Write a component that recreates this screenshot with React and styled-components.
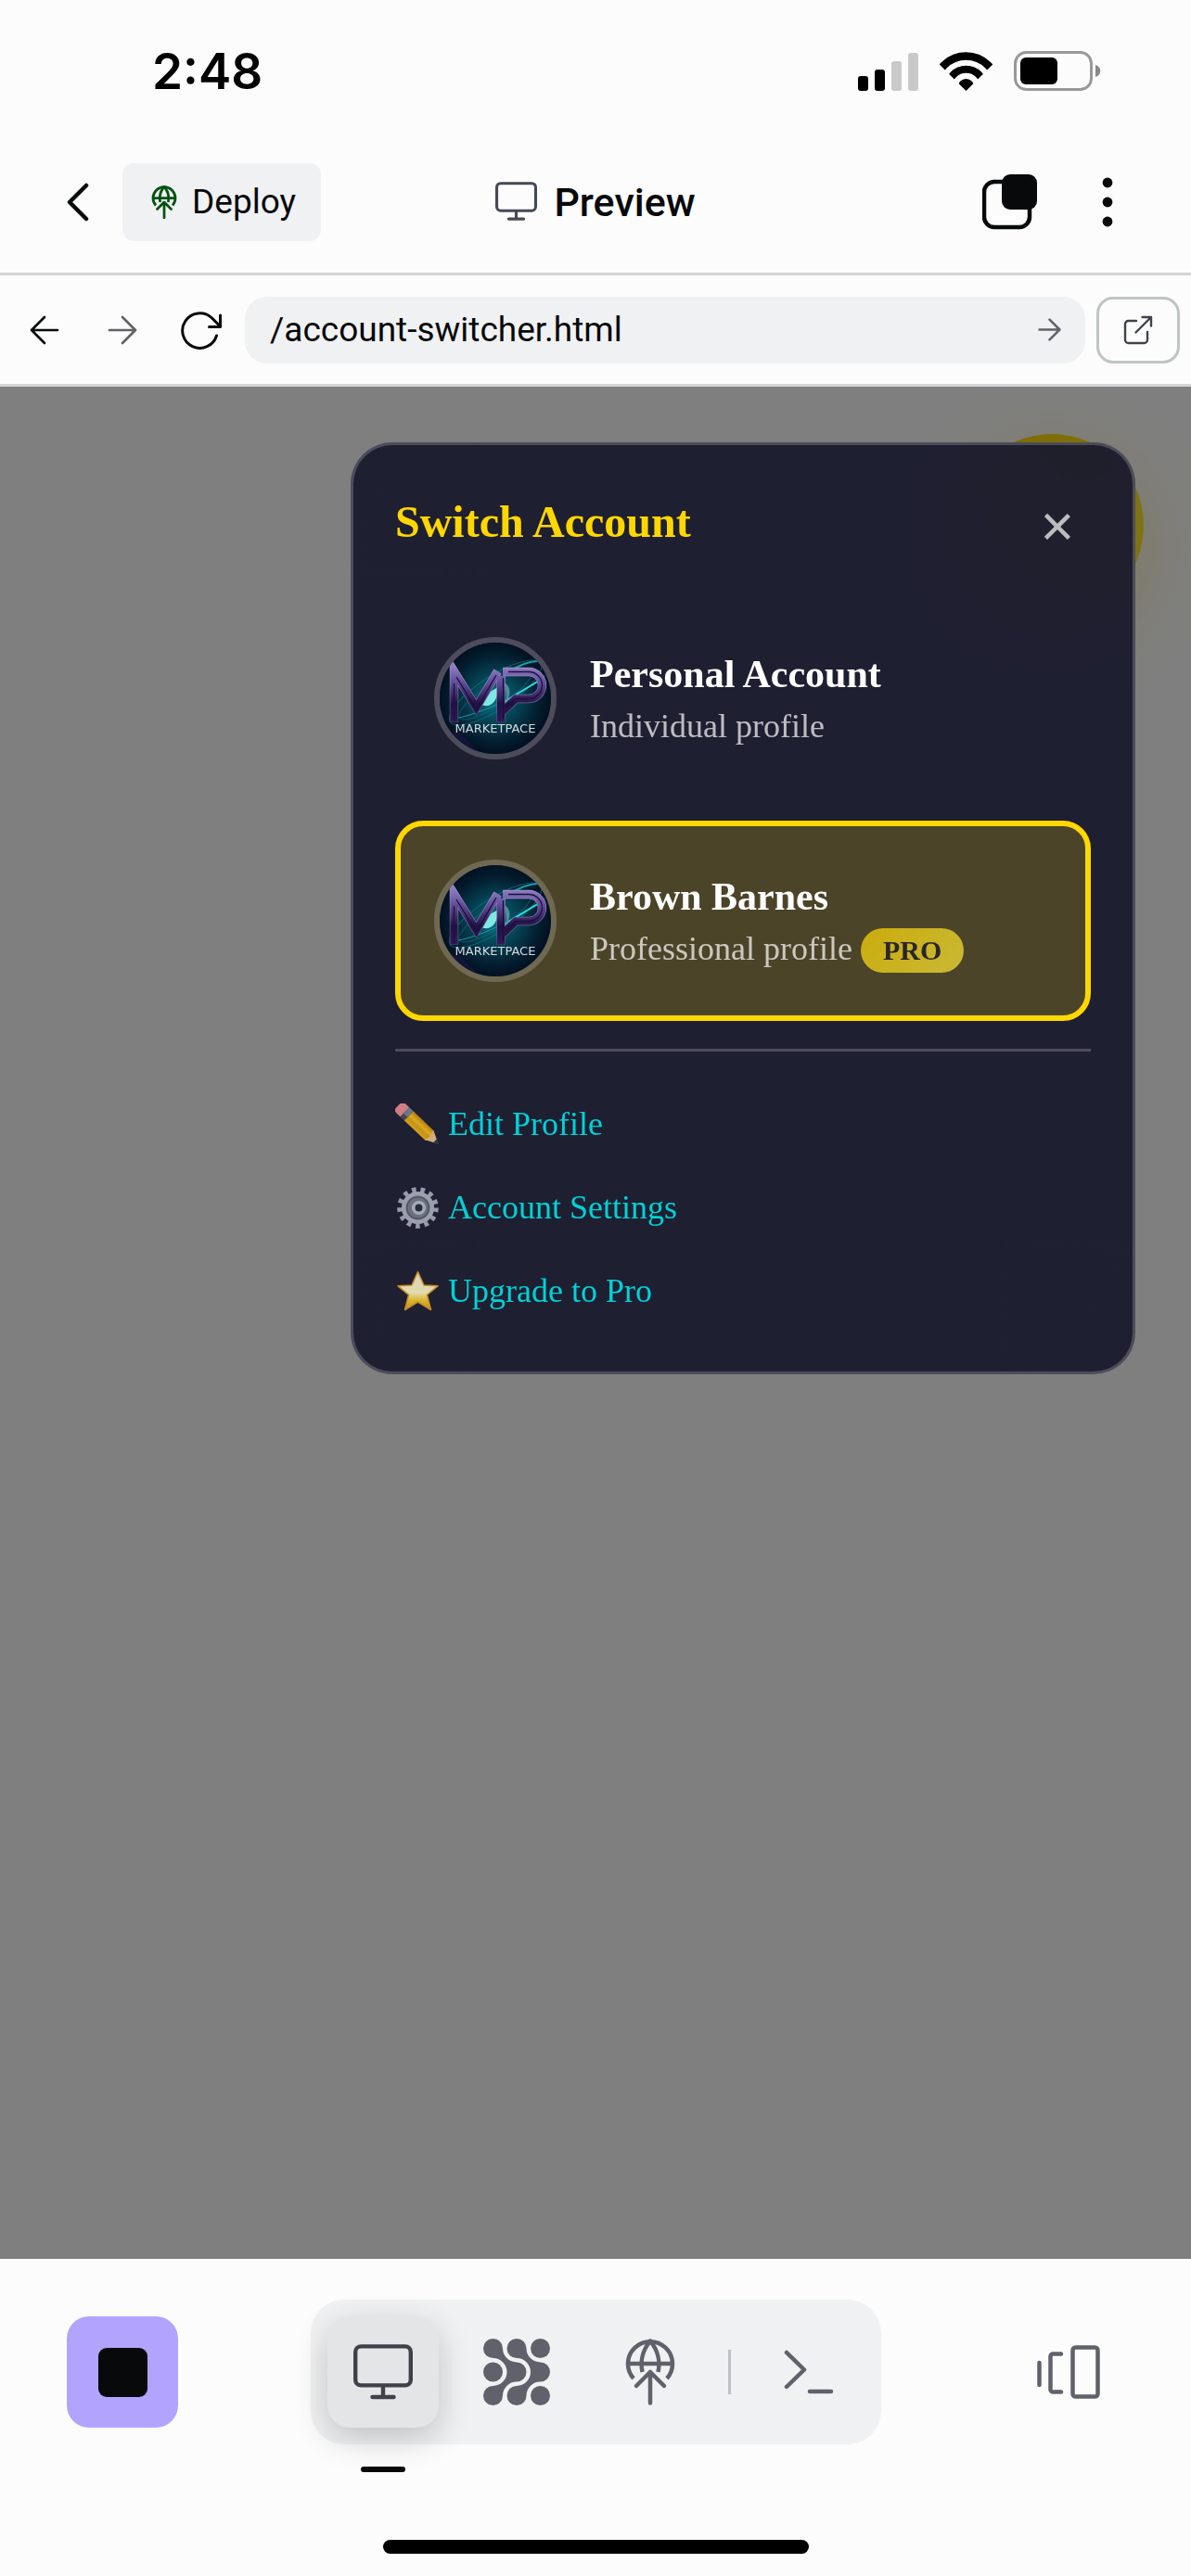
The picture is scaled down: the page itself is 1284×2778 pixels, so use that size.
import React, { useState } from "react";
import styled, { createGlobalStyle } from "styled-components";

const GlobalStyle = createGlobalStyle`
  * { box-sizing: border-box; }
  body { margin: 0; background: #fcfcfc; }
  button, input { font: inherit; color: inherit; border: 0; background: none; padding: 0; margin: 0; }
  svg { display: block; flex: none; }
`;

const Page = styled.div`
  min-height: 100vh;
  display: flex;
  flex-direction: column;
  background: #fcfcfc;
  color: #07090b;
  font-family: Roboto, "Liberation Sans", sans-serif;
`;

/* Status bar */

const StatusBar = styled.div`
  height: 141px;
  padding: 12px 97px 0 164px;
  display: flex;
  align-items: center;
  justify-content: space-between;
  color: #000;
`;

const Clock = styled.time`
  font: 600 53px/60px Inter, "Liberation Sans", sans-serif;
`;

const StatusIcons = styled.div`
  display: flex;
  align-items: center;
  gap: 23px;
`;

/* App header */

const Header = styled.header`
  height: 156px;
  padding: 0 48px;
  display: grid;
  grid-template-columns: 1fr auto 1fr;
  align-items: center;
  border-bottom: 3px solid #d3d5d7;
`;

const HeaderSide = styled.div`
  display: flex;
  align-items: center;
  justify-content: ${(p) => (p.$end ? "flex-end" : "flex-start")};
  gap: ${(p) => (p.$end ? 21 : 12)}px;
`;

const IconButton = styled.button`
  width: ${(p) => p.$size || 84}px;
  height: ${(p) => p.$size || 84}px;
  flex: none;
  display: flex;
  align-items: center;
  justify-content: center;
  color: ${(p) => p.$color || "#07090b"};
`;

const DeployButton = styled.button`
  && {
    height: 84px;
    padding: 0 27px;
    display: flex;
    align-items: center;
    gap: 12px;
    border-radius: 12px;
    background: #f0f1f3;
    font-size: 37px;
    line-height: 48px;
  }
`;

const Title = styled.h1`
  margin: 0;
  display: flex;
  align-items: center;
  gap: 18px;
  font-size: 43px;
  line-height: 54px;
  font-weight: 500;
`;

const TitleIcon = styled.span`
  color: #464955;
`;

/* Address bar */

const AddressRow = styled.form`
  height: 120px;
  padding: 0 12px 0 6px;
  display: flex;
  align-items: center;
  border-bottom: 3px solid #d3d5d7;
`;

const AddressField = styled.div`
  flex: 1;
  min-width: 0;
  height: 72px;
  margin: 0 12px 0 6px;
  padding-left: 27px;
  display: flex;
  align-items: center;
  border-radius: 24px;
  background: #f0f1f3;
`;

const AddressInput = styled.input`
  && {
    flex: 1;
    min-width: 0;
    height: 48px;
    font-size: 37px;
    line-height: 48px;
    outline: none;
  }
`;

const OpenButton = styled.button`
  && {
    width: 90px;
    height: 72px;
    flex: none;
    display: flex;
    align-items: center;
    justify-content: center;
    border: 3px solid #bfc4c5;
    border-radius: 18px;
    color: #40434b;
  }
`;

/* Previewed page */

const Stage = styled.main`
  position: relative;
  isolation: isolate;
  flex: 1;
  padding: 60px;
  display: flex;
  flex-direction: column;
  align-items: flex-end;
  overflow: hidden;
  background: #fff;
  font-family: "Liberation Serif", serif;
`;

const FloatingButton = styled.button`
  && {
    position: absolute;
    top: 51px;
    right: 51px;
    width: 198px;
    height: 198px;
    border-radius: 50%;
    background: linear-gradient(135deg, #ffd700, #ffeb3b);
    box-shadow: 0 24px 90px rgba(255, 215, 0, 0.3);
  }
`;

const Scrim = styled.div`
  position: absolute;
  inset: 0;
  background: rgba(0, 0, 0, 0.5);
`;

const Panel = styled.section`
  position: relative;
  width: 100%;
  max-width: 846px;
  padding: 45px 45px 42px;
  border: 3px solid rgba(255, 255, 255, 0.2);
  border-radius: 45px;
  background: rgba(26, 26, 46, 0.95);
  backdrop-filter: blur(60px);
  color: #fff;
`;

const PanelHeader = styled.div`
  margin-bottom: 36px;
  display: flex;
  align-items: flex-start;
  justify-content: space-between;
`;

const PanelTitle = styled.h2`
  margin: 0;
  font-size: 48px;
  line-height: 76px;
  font-weight: 700;
  color: #ffd700;
`;

const CloseButton = styled.button`
  && {
    width: 72px;
    height: 84px;
    font: 63px/84px "Liberation Sans", sans-serif;
    color: rgba(255, 255, 255, 0.7);
  }
`;

const Accounts = styled.div`
  display: flex;
  flex-direction: column;
  gap: 24px;
`;

const Account = styled.button`
  && {
    width: 100%;
    padding: 36px;
    display: flex;
    align-items: center;
    gap: 36px;
    text-align: left;
    border: 6px solid ${(p) => (p.$active ? "#ffd700" : "transparent")};
    border-radius: 30px;
    background: ${(p) => (p.$active ? "rgba(255, 215, 0, 0.2)" : "transparent")};
    background-clip: padding-box;
  }
`;

const Avatar = styled.span`
  width: 132px;
  height: 132px;
  flex: none;
  overflow: hidden;
  border: 6px solid rgba(255, 255, 255, 0.2);
  border-radius: 50%;
  background-clip: padding-box;
`;

const AccountText = styled.span`
  padding-top: 4px;
  display: flex;
  flex-direction: column;
  gap: 4px;
`;

const AccountName = styled.span`
  font-size: 42px;
  line-height: 52px;
  font-weight: 700;
`;

const AccountKind = styled.span`
  font-size: 36px;
  line-height: 52px;
  opacity: 0.7;
`;

const Badge = styled.span`
  display: inline-block;
  padding: 6px 24px;
  border-radius: 24px;
  background: linear-gradient(135deg, #ffd700, #ffeb3b);
  font-size: 30px;
  line-height: 36px;
  font-weight: 700;
  color: #1a1a2e;
`;

const PanelLinks = styled.nav`
  margin-top: 30px;
  padding-top: 33px;
  display: flex;
  flex-direction: column;
  border-top: 3px solid rgba(255, 255, 255, 0.2);
`;

const PanelLink = styled.a`
  height: 90px;
  display: flex;
  align-items: center;
  gap: 10px;
  font-size: 36px;
  line-height: 42px;
  color: #00d2d6;
  text-decoration: none;
`;

/* Dock */

const Footer = styled.footer`
  height: 342px;
  padding: 44px 72px 24px;
  display: flex;
  flex-direction: column;
  justify-content: space-between;
`;

const DockRow = styled.div`
  display: flex;
  align-items: center;
  justify-content: space-between;
`;

const StopButton = styled.button`
  && {
    width: 120px;
    height: 120px;
    display: grid;
    place-items: center;
    border-radius: 24px;
    background: #b2a3ff;
  }
`;

const StopMark = styled.span`
  width: 53px;
  height: 53px;
  border-radius: 9px;
  background: #07090b;
`;

const Dock = styled.div`
  height: 156px;
  padding: 0 18px;
  display: flex;
  align-items: center;
  gap: 24px;
  border-radius: 36px;
  background: #f0f1f3;
`;

const DockTab = styled.button`
  && {
    position: relative;
    width: 120px;
    height: 120px;
    display: grid;
    place-items: center;
    border-radius: 24px;
    color: ${(p) => (p.$active ? "#3f414a" : "#5f626a")};
    background: ${(p) => (p.$active ? "#e4e5e7" : "transparent")};
    box-shadow: ${(p) => (p.$active ? "0 12px 36px rgba(0, 0, 0, 0.2)" : "none")};
  }
`;

const TabMarker = styled.span`
  position: absolute;
  left: 36px;
  top: 162px;
  width: 48px;
  height: 6px;
  border-radius: 3px;
  background: #07090b;
`;

const DockDivider = styled.span`
  width: 3px;
  height: 48px;
  background: #c0c1c4;
`;

const HomeIndicator = styled.div`
  align-self: center;
  width: 459px;
  max-width: 100%;
  height: 15px;
  border-radius: 8px;
  background: #000;
`;

/* Icons */

const line = { fill: "none", stroke: "currentColor", strokeLinecap: "round", strokeLinejoin: "round" };

const Signal = () => (
  <svg width="65" height="42" viewBox="0 0 65 42">
    <rect x="0" y="26" width="11" height="16" rx="3" />
    <rect x="18" y="19" width="11" height="23" rx="3" />
    <rect x="36" y="10" width="11" height="32" rx="3" fill="#c9c9c9" />
    <rect x="54" y="1" width="11" height="41" rx="3" fill="#c9c9c9" />
  </svg>
);

const Wifi = () => (
  <svg width="57" height="42" viewBox="0 0 57 42">
    <clipPath id="wifi-wedge">
      <path d="M28.5 42L-14 0H71z" />
    </clipPath>
    <g clipPath="url(#wifi-wedge)" fill="none" stroke="#000">
      <circle cx="28.5" cy="38" r="33.5" strokeWidth="8.5" />
      <circle cx="28.5" cy="38" r="19.3" strokeWidth="8" />
      <circle cx="28.5" cy="38" r="9" fill="#000" stroke="none" />
    </g>
  </svg>
);

const Battery = () => (
  <svg width="94" height="43" viewBox="0 0 94 43">
    <rect x="1.5" y="1.5" width="82" height="40" rx="12" fill="none" stroke="#999" strokeWidth="3" />
    <rect x="7" y="7" width="40" height="29" rx="6" />
    <path d="M88 15c7 2 7 11 0 13z" fill="#888" />
  </svg>
);

const Chevron = () => (
  <svg width="24" height="42" viewBox="0 0 24 42" {...line} strokeWidth="4.5">
    <path d="M21 3L3 21l18 18" />
  </svg>
);

const Globe = ({ height, weight = 4.5, ...rest }) => (
  <svg height={height} width={height} viewBox="-9.5 0 72 72" {...line} strokeWidth={weight} {...rest}>
    <path strokeLinecap="butt" d="M8.5 43A24 24 0 1 1 44.5 43" />
    <path strokeLinecap="butt" d="M2.5 27h48M18 36c-2-9-1-22 8.5-33.5C36 14 37 27 35 36" />
    <path d="M26.5 69.5V36M11.5 51l15-15 15 15" />
  </svg>
);

const Monitor = ({ width }) => (
  <svg width={width} viewBox="0 0 64 60" {...line} strokeWidth="4.4">
    <rect x="2.2" y="2.4" width="59.6" height="42" rx="6" />
    <path d="M32 45v12M20.5 57h23" />
  </svg>
);

const Windows = () => (
  <svg width="60" height="60" viewBox="0 0 60 60">
    <rect x="2" y="8" width="49" height="49" rx="11" fill="none" stroke="currentColor" strokeWidth="4.5" />
    <rect x="21" y="0" width="38" height="38" rx="9" fill="currentColor" />
  </svg>
);

const Dots = () => (
  <svg width="12" height="54" viewBox="0 0 12 54" fill="currentColor">
    <circle cx="6" cy="6" r="5.4" />
    <circle cx="6" cy="27" r="5.4" />
    <circle cx="6" cy="48" r="5.4" />
  </svg>
);

const Arrow = ({ size, weight = 2.7, back }) => (
  <svg width={size} height={size} viewBox="0 0 32 32" {...line} strokeWidth={weight}>
    <path d={back ? "M30 16H2M16 2L2 16l14 14" : "M2 16h28M16 2l14 14-14 14"} />
  </svg>
);

const Reload = () => (
  <svg width="46" height="42" viewBox="-1 0 46 42" {...line} strokeWidth="3">
    <path d="M39.5 27A18.8 18.8 0 1 1 34 7.500l9.500 9.500" />
    <path d="M43.500 5v12.500H31.500" />
  </svg>
);

const External = () => (
  <svg width="32" height="32" viewBox="0 0 32 32" {...line} strokeWidth="2.4">
    <path d="M14 6H5.500A3.500 3.500 0 0 0 2 9.500v17A3.500 3.500 0 0 0 5.500 30h17a3.500 3.500 0 0 0 3.500-3.500V18" />
    <path d="M13.500 18.500L30 2M20.500 2H30v9.500" />
  </svg>
);

const Mesh = () => (
  <svg width="72" height="72" viewBox="0 0 72 72" fill="currentColor">
    <circle cx="10.5" cy="36" r="10.5" />
    <circle cx="61.5" cy="10.5" r="10.5" />
    <circle cx="61.5" cy="61.5" r="10.5" />
    {[0, 25.5].map((x) => (
      <path
        key={x}
        transform={`translate(${x} 0)`}
        d="M10.500 0A10.500 10.500 0 0 1 21 10.500A15 15 0 0 0 36 25.500A10.500 10.500 0 0 1 36 46.500A15 15 0 0 0 21 61.500A10.500 10.500 0 1 1 10.500 51A15 15 0 0 0 10.500 21A10.500 10.500 0 0 1 10.500 0z"
      />
    ))}
  </svg>
);

const Terminal = () => (
  <svg width="54" height="48" viewBox="0 0 54 48" {...line} strokeWidth="4.5">
    <path d="M3 3l19 18.500L3 40M28 45h23" />
  </svg>
);

const Layers = () => (
  <svg width="68" height="58" viewBox="0 0 68 58" {...line} strokeWidth="4.5">
    <path d="M2.500 19v24M26 9.500H17a2.500 2.500 0 0 0-2.500 2.500v36a2.500 2.500 0 0 0 2.500 2.500h9" />
    <rect x="38.500" y="2.500" width="27" height="53" rx="3" />
  </svg>
);

const Pencil = () => (
  <svg width="47" height="45" viewBox="-2 0 47 45" opacity="0.88">
    <defs>
      <linearGradient id="pencil-body" x2="0" y2="1">
        <stop offset="0" stopColor="#c38d12" />
        <stop offset="0.4" stopColor="#f5bd1c" />
        <stop offset="0.65" stopColor="#dca011" />
        <stop offset="1" stopColor="#ecb41c" />
      </linearGradient>
    </defs>
    <g transform="translate(5.5 6.5) rotate(43.5)">
      <path d="M-2-7h6V7h-6a4 4 0 0 1-4-4v-6a4 4 0 0 1 4-4z" fill="#e98b90" />
      <path d="M4-7h6V7H4z" fill="#71839a" />
      <path d="M4 2h6v5H4z" fill="#4e4c54" />
      <path d="M10-7h31l3 4v7l-3 3H10z" fill="url(#pencil-body)" />
      <path d="M40-7l14 7-14 7 2-5-1-3z" fill="#eac288" />
      <path d="M49-2.500L55 0l-6 2.500z" fill="#30333b" />
    </g>
  </svg>
);

const Gear = () => (
  <svg width="47" height="45" viewBox="-2 0 47 45" fill="none" opacity="0.9">
    <circle cx="22.5" cy="22.5" r="19.3" stroke="#a3a9b8" strokeWidth="6" strokeDasharray="4.5 4.827" />
    <circle cx="22.5" cy="22.5" r="15.3" fill="#747a87" stroke="#a9adbb" strokeWidth="4.5" />
    <circle cx="22.5" cy="22.5" r="11.8" stroke="#535965" strokeWidth="1.5" />
    <circle cx="23.5" cy="22.5" r="5.8" fill="#2b2c39" stroke="#b3bac7" strokeWidth="3.6" />
  </svg>
);

const Star = () => (
  <svg width="47" height="45" viewBox="-2 0 47 45">
    <defs>
      <linearGradient id="star-fill" x2="0" y2="1">
        <stop offset="0" stopColor="#d8d0b8" />
        <stop offset="0.55" stopColor="#e2dcae" />
        <stop offset="0.75" stopColor="#d9b62e" />
        <stop offset="1" stopColor="#c88d17" />
      </linearGradient>
    </defs>
    <path
      d="M22.500 1.500L29 16l15 .8-11.600 9.500L36.500 42.500l-14-8.500-14 8.500 4.100-16.200L1 16.800 16 16z"
      fill="url(#star-fill)"
      stroke="#c58d2a"
      strokeWidth="1.5"
      strokeLinejoin="round"
    />
  </svg>
);

const LogoMark = ({ id }) => (
  <svg width="120" height="120" viewBox="6 6 120 120" role="img" aria-label="Marketpace logo">
    <defs>
      <radialGradient id={`${id}-sky`} cx="0.5" cy="0.5" r="0.52">
        <stop offset="0" stopColor="#08737f" />
        <stop offset="0.35" stopColor="#05495a" />
        <stop offset="0.75" stopColor="#031f30" />
        <stop offset="1" stopColor="#020e20" />
      </radialGradient>
      <linearGradient id={`${id}-metal`} gradientUnits="userSpaceOnUse" x1="0" y1="32" x2="0" y2="93">
        <stop offset="0" stopColor="#8f7dc4" />
        <stop offset="0.3" stopColor="#5d4a94" />
        <stop offset="0.65" stopColor="#221144" />
        <stop offset="1" stopColor="#2f1c58" />
      </linearGradient>
      <linearGradient id={`${id}-edge`} gradientUnits="userSpaceOnUse" x1="0" y1="32" x2="0" y2="93">
        <stop offset="0" stopColor="#a79bd0" />
        <stop offset="1" stopColor="#4f4478" />
      </linearGradient>
    </defs>
    <rect x="6" y="6" width="120" height="120" fill={`url(#${id}-sky)`} />
    <path d="M6 126v-20l20-4 24 24z" fill="#1c1544" opacity="0.6" />
    <g fill="none" strokeLinecap="round">
      <ellipse cx="66" cy="60" rx="58" ry="18" transform="rotate(-33 66 60)" stroke="#0b8f9b" strokeWidth="1" opacity="0.55" />
      <ellipse cx="66" cy="62" rx="46" ry="12" transform="rotate(-33 66 62)" stroke="#087b89" strokeWidth="1.5" opacity="0.4" />
      <path d="M80 38c12-8 24-12 32-12" stroke="#12a3ae" strokeWidth="2" />
      <path d="M22 88C55 82 92 62 119 42" stroke="#0fa0aa" strokeWidth="1" />
      <path d="M76 70C88 62 98 56 110 49" stroke="#2be0e4" strokeWidth="2" />
    </g>
    <path d="M50 72c8 6 18 0 20-18-10 4-18 10-20 18z" fill="#7fe8e6" />
    <path d="M74 48c8 4 10 12 4 22 0-8 0-14-4-22z" fill="#558c9b" />
    <g fill="none" stroke={`url(#${id}-edge)`} strokeWidth="9.4">
      <path d="M21.500 92V37l24 39 23-39" />
      <path d="M72 92V42" />
      <path d="M74 37.500h28a14.500 14.500 0 0 1 0 29H88L74 80" />
    </g>
    <g fill="none" stroke={`url(#${id}-metal)`} strokeWidth="8">
      <path d="M21.500 91.500V37l24 39 23-39" />
      <path d="M72 91.500V42" />
      <path d="M74 37.500h28a14.500 14.500 0 0 1 0 29H88L74 80" />
    </g>
    <g fill="none" stroke="#1b0f3c" strokeWidth="1.3">
      <path d="M21.500 90V50M24 43l21.500 35L67 41" />
      <path d="M74.500 88V44M80 37.500h22a14.500 14.500 0 0 1 0 29H88L78 76" />
    </g>
    <text x="66" y="103" textAnchor="middle" fontFamily="DejaVu Sans, sans-serif" fontSize="13" fill="#d3dbe2">
      MARKETPACE
    </text>
  </svg>
);

/* Data */

const accounts = [
  { id: "personal", name: "Personal Account", kind: "Individual profile" },
  { id: "business", name: "Brown Barnes", kind: "Professional profile", pro: true },
];

const links = [
  { label: "Edit Profile", Icon: Pencil },
  { label: "Account Settings", Icon: Gear },
  { label: "Upgrade to Pro", Icon: Star },
];

const tabs = [
  { label: "Preview", icon: <Monitor width="64" /> },
  { label: "Agent", icon: <Mesh /> },
  { label: "Deployments", icon: <Globe height="72" /> },
  { label: "Shell", icon: <Terminal /> },
];

export default function App() {
  const [path, setPath] = useState("/account-switcher.html");
  const [current, setCurrent] = useState("business");
  const [tab, setTab] = useState("Preview");

  return (
    <Page>
      <GlobalStyle />
      <StatusBar>
        <Clock>2:48</Clock>
        <StatusIcons>
          <Signal />
          <Wifi />
          <Battery />
        </StatusIcons>
      </StatusBar>

      <Header>
        <HeaderSide>
          <IconButton $size={72} aria-label="Back">
            <Chevron />
          </IconButton>
          <DeployButton>
            <Globe height="36" weight={5.5} color="#00520f" />
            Deploy
          </DeployButton>
        </HeaderSide>
        <Title>
          <TitleIcon>
            <Monitor width="45" />
          </TitleIcon>
          Preview
        </Title>
        <HeaderSide $end>
          <IconButton aria-label="Windows">
            <Windows />
          </IconButton>
          <IconButton aria-label="More">
            <Dots />
          </IconButton>
        </HeaderSide>
      </Header>

      <AddressRow onSubmit={(e) => e.preventDefault()}>
        <IconButton type="button" aria-label="Previous page">
          <Arrow size="32" back />
        </IconButton>
        <IconButton type="button" $color="#5f626a" aria-label="Next page">
          <Arrow size="32" />
        </IconButton>
        <IconButton type="button" aria-label="Reload">
          <Reload />
        </IconButton>
        <AddressField>
          <AddressInput aria-label="Page address" value={path} onChange={(e) => setPath(e.target.value)} />
          <IconButton $size={78} $color="#5f626a" aria-label="Go">
            <Arrow size="25" weight={3.2} />
          </IconButton>
        </AddressField>
        <OpenButton type="button" aria-label="Open in new tab">
          <External />
        </OpenButton>
      </AddressRow>

      <Stage>
        <FloatingButton aria-label="Accounts" />
        <Scrim />
        <Panel aria-labelledby="panel-title">
          <PanelHeader>
            <PanelTitle id="panel-title">Switch Account</PanelTitle>
            <CloseButton aria-label="Close">×</CloseButton>
          </PanelHeader>
          <Accounts>
            {accounts.map((a) => (
              <Account key={a.id} $active={a.id === current} onClick={() => setCurrent(a.id)}>
                <Avatar>
                  <LogoMark id={a.id} />
                </Avatar>
                <AccountText>
                  <AccountName>{a.name}</AccountName>
                  <AccountKind>
                    {a.kind} {a.pro && <Badge>PRO</Badge>}
                  </AccountKind>
                </AccountText>
              </Account>
            ))}
          </Accounts>
          <PanelLinks>
            {links.map(({ label, Icon }) => (
              <PanelLink key={label} href="#">
                <Icon />
                {label}
              </PanelLink>
            ))}
          </PanelLinks>
        </Panel>
      </Stage>

      <Footer>
        <DockRow>
          <StopButton aria-label="Stop">
            <StopMark />
          </StopButton>
          <Dock>
            {tabs.map((t) => (
              <React.Fragment key={t.label}>
                {t.label === "Shell" && <DockDivider />}
                <DockTab $active={t.label === tab} aria-label={t.label} onClick={() => setTab(t.label)}>
                  {t.icon}
                  {t.label === tab && <TabMarker />}
                </DockTab>
              </React.Fragment>
            ))}
          </Dock>
          <IconButton $size={120} $color="#5f626a" aria-label="Open tabs">
            <Layers />
          </IconButton>
        </DockRow>
        <HomeIndicator />
      </Footer>
    </Page>
  );
}
